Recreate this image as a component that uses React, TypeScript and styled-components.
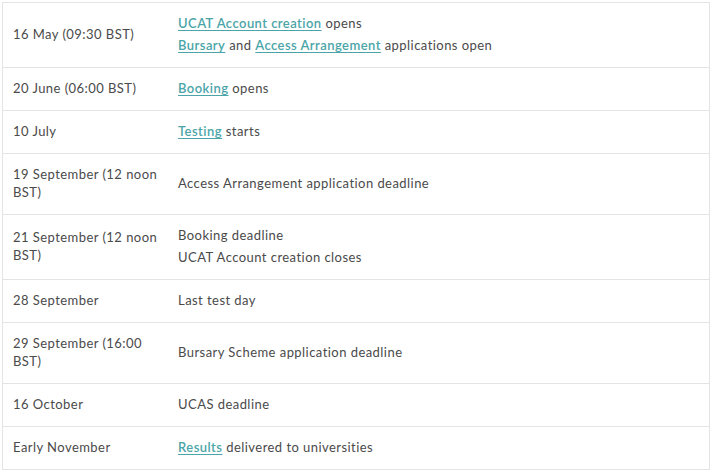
import React from "react";
import styled, { createGlobalStyle } from "styled-components";

const Global = createGlobalStyle`
  html, body { margin: 0; padding: 0; background: #ffffff; }
  body { font-family: "Lato", "Open Sans", sans-serif; }
`;

const Wrap = styled.div`
  padding: 2px;
`;

const Table = styled.table`
  width: 708px;
  border-collapse: collapse;
  border: 1px solid #e4e4e4;
  font-size: 13px;
  line-height: 18px;
  letter-spacing: 0.45px;
  color: #4a4a4a;
`;

const Row = styled.tr`
  border-bottom: 1px solid #e4e4e4;
`;

const DateCell = styled.td`
  width: 145px;
  padding: 11px 10px 13px 10px;
  vertical-align: middle;
`;

const EventCell = styled.td`
  padding: 11px 10px 13px 10px;
  vertical-align: middle;
`;

const Line = styled.div`
  & + & { margin-top: 4px; }
`;

const Link = styled.a`
  color: #4ba5a8;
  text-decoration: underline;
  text-underline-offset: 2px;
  font-weight: 600;
`;

type Part = string | { link: string };
type Item = { date: string; lines: Part[][] };

const items: Item[] = [
  { date: "16 May (09:30 BST)", lines: [[{ link: "UCAT Account creation" }, " opens"], [{ link: "Bursary" }, " and ", { link: "Access Arrangement" }, " applications open"]] },
  { date: "20 June (06:00 BST)", lines: [[{ link: "Booking" }, " opens"]] },
  { date: "10 July", lines: [[{ link: "Testing" }, " starts"]] },
  { date: "19 September (12 noon BST)", lines: [["Access Arrangement application deadline"]] },
  { date: "21 September (12 noon BST)", lines: [["Booking deadline"], ["UCAT Account creation closes"]] },
  { date: "28 September", lines: [["Last test day"]] },
  { date: "29 September (16:00 BST)", lines: [["Bursary Scheme application deadline"]] },
  { date: "16 October", lines: [["UCAS deadline"]] },
  { date: "Early November", lines: [[{ link: "Results" }, " delivered to universities"]] },
];

export default function App() {
  return (
    <Wrap>
      <Global />
      <Table>
        <tbody>
          {items.map((it, i) => (
            <Row key={i}>
              <DateCell>{it.date}</DateCell>
              <EventCell>
                {it.lines.map((ln, j) => (
                  <Line key={j}>
                    {ln.map((p, k) =>
                      typeof p === "string" ? <React.Fragment key={k}>{p}</React.Fragment> : <Link key={k} href="#">{p.link}</Link>
                    )}
                  </Line>
                ))}
              </EventCell>
            </Row>
          ))}
        </tbody>
      </Table>
    </Wrap>
  );
}
